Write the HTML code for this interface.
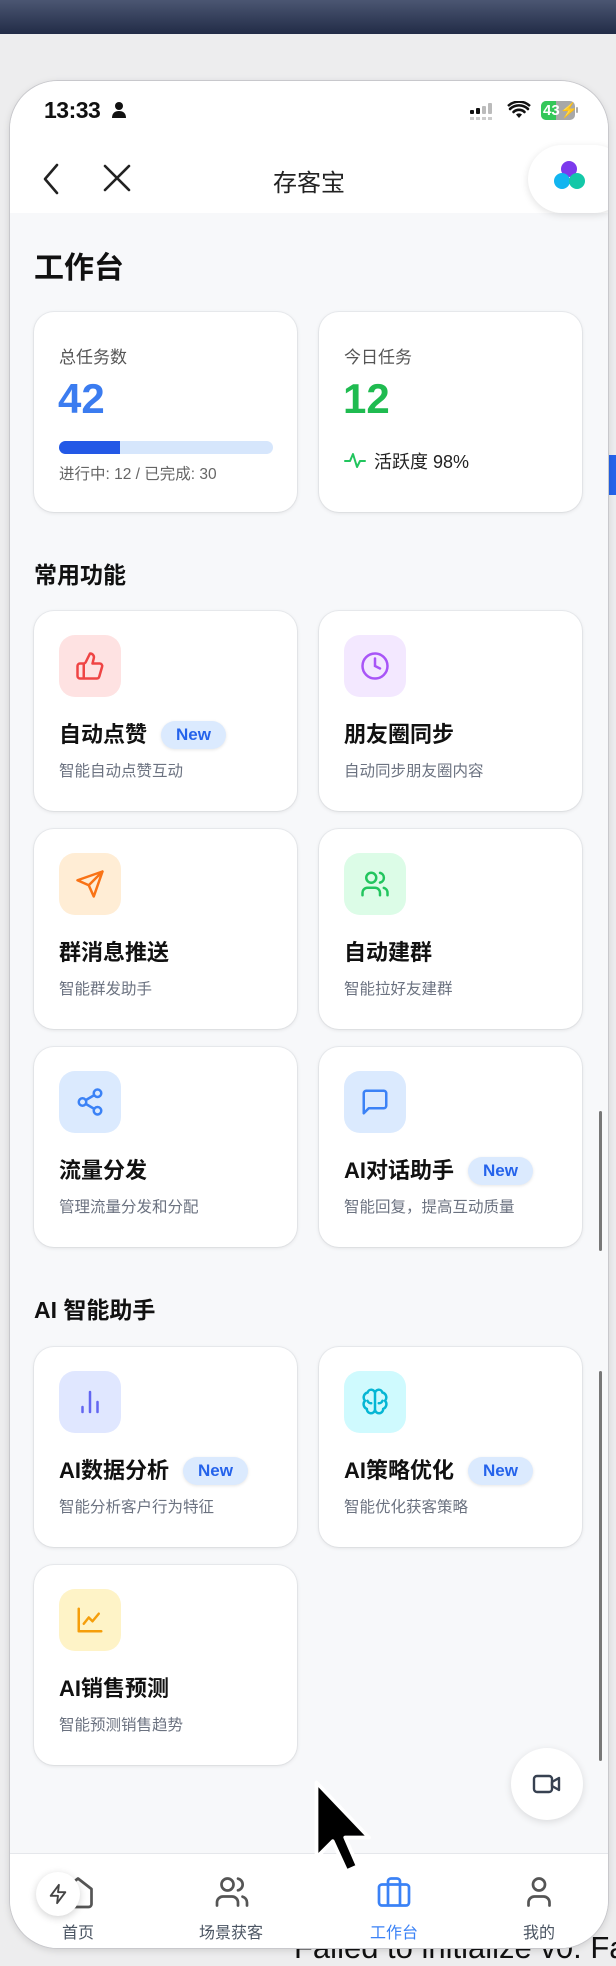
<!DOCTYPE html>
<html><head><meta charset="utf-8"><style>
*{margin:0;padding:0;box-sizing:border-box}
body{width:616px;height:1954px;overflow:hidden;background:#ededee;font-family:"Liberation Sans","Noto Sans CJK SC",sans-serif;position:relative;color:#111}
.abs{position:absolute}
.topbar{left:0;top:0;width:616px;height:34px;background:linear-gradient(#4b5672,#222c47)}
.phone{left:10px;top:81px;width:598px;height:1867px;background:#f7f8fa;border-radius:48px;overflow:hidden;box-shadow:0 0 0 1px #c8c8cc,0 2px 8px rgba(0,0,0,.15)}
.card{position:absolute;background:#fff;border-radius:20px;box-shadow:0 1px 4px rgba(0,0,0,.1),0 0 0 1px #eceef1}
.ib{position:absolute;left:25px;top:24px;width:62px;height:62px;border-radius:16px;display:flex;align-items:center;justify-content:center}
.t{position:absolute;left:25px;top:109px;font-size:22px;font-weight:bold;line-height:30px;color:#111;display:flex;align-items:center}
.s{position:absolute;left:25px;top:151px;font-size:15.5px;color:#6b7280;line-height:20px}
.new{display:inline-block;margin-left:14px;background:#dbeafe;color:#2563eb;font-size:17px;font-weight:bold;border-radius:16px;padding:3px 15px;line-height:22px;box-shadow:0 1px 3px rgba(0,0,0,.1)}
.h{position:absolute;left:24px;font-size:23px;font-weight:bold}
.tab{position:absolute;top:1838px;width:120px;text-align:center;font-size:16px;color:#4b5563}
</style></head><body>
<div class="abs topbar"></div>
<div class="abs" style="left:294px;top:1930px;font-size:31px;color:#111;white-space:nowrap">Failed to initialize v0: Fai</div>
<div class="abs" style="left:608px;top:455px;width:8px;height:40px;background:#2563eb"></div>
<div class="abs phone">
  <div class="abs" style="left:0;top:0;width:598px;height:132px;background:#fff"></div>
  <div class="abs" style="left:34px;top:16px;font-size:23px;font-weight:bold;letter-spacing:-0.5px">13:33</div>
  <svg class="abs" style="left:101px;top:20px" width="16" height="18" viewBox="0 0 16 18"><circle cx="8" cy="5" r="4" fill="#111"/><path d="M1 17c0-5 3-7 7-7s7 2 7 7z" fill="#111"/></svg>
  <svg class="abs" style="left:460px;top:22px" width="26" height="18" viewBox="0 0 26 18"><rect x="0" y="7" width="4" height="4" rx="1" fill="#111"/><rect x="6" y="5" width="4" height="6" rx="1" fill="#111"/><rect x="12" y="3" width="4" height="8" rx="1" fill="#bbb"/><rect x="18" y="0" width="4" height="11" rx="1" fill="#bbb"/><g fill="#ccc"><rect x="0" y="14" width="4" height="3"/><rect x="6" y="14" width="4" height="3"/><rect x="12" y="14" width="4" height="3"/><rect x="18" y="14" width="4" height="3"/></g></svg>
  <svg class="abs" style="left:497px;top:20px" width="24" height="18" viewBox="0 0 24 18"><path d="M12 17l-3-3.5a4.5 4.5 0 016 0z" fill="#111"/><path d="M3 8a13 13 0 0118 0M6.5 11a8 8 0 0111 0" stroke="#111" stroke-width="2.6" fill="none" stroke-linecap="round"/><path d="M1 5a16 16 0 0122 0" stroke="#111" stroke-width="2.4" fill="none"/></svg>
  <div class="abs" style="left:531px;top:20px;width:34px;height:19px;border-radius:5px;background:#a8a8a8;overflow:hidden"><div style="width:15px;height:19px;background:#34c759"></div><div class="abs" style="left:2px;top:0;font-size:15px;font-weight:bold;color:#fff;line-height:19px">43⚡</div></div>
  <div class="abs" style="left:566px;top:26px;width:2px;height:6px;background:#aaa;border-radius:1px"></div>
  <svg class="abs" style="left:28px;top:80px" width="28" height="36" viewBox="0 0 28 36"><path d="M19 4L7 18l12 14" stroke="#222" stroke-width="2.6" fill="none" stroke-linecap="round" stroke-linejoin="round"/></svg>
  <svg class="abs" style="left:92px;top:82px" width="30" height="30" viewBox="0 0 30 30"><path d="M3 3l24 24M27 3L3 27" stroke="#222" stroke-width="2.6" stroke-linecap="round"/></svg>
  <div class="abs" style="left:0;width:598px;top:82px;text-align:center;font-size:24px;color:#222">存客宝</div>
  <div class="abs" style="left:518px;top:64px;width:100px;height:68px;border-radius:34px;background:#fff;box-shadow:0 2px 8px rgba(0,0,0,.12)"></div>
  <svg class="abs" style="left:540px;top:76px" width="40" height="40" viewBox="0 0 40 40"><circle cx="19" cy="12" r="8" fill="#7c3aed"/><circle cx="12" cy="24" r="8" fill="#12b5f0"/><circle cx="27" cy="24" r="8" fill="#14c8a8"/></svg>
  <div class="abs" style="left:24px;top:162px;font-size:30px;font-weight:bold">工作台</div>
  <div class="card" style="left:24px;top:231px;width:263px;height:200px">
    <div class="abs" style="left:25px;top:31px;font-size:17px;color:#555">总任务数</div>
    <div class="abs" style="left:24px;top:63px;font-size:42px;font-weight:bold;color:#3b7cf0">42</div>
    <div class="abs" style="left:25px;top:129px;width:214px;height:13px;border-radius:7px;background:#d6e6fc;overflow:hidden"><div style="width:61px;height:13px;background:#2358e6"></div></div>
    <div class="abs" style="left:25px;top:150px;font-size:15.5px;color:#666">进行中: 12 / 已完成: 30</div>
  </div>
  <div class="card" style="left:309px;top:231px;width:263px;height:200px">
    <div class="abs" style="left:25px;top:31px;font-size:17px;color:#555">今日任务</div>
    <div class="abs" style="left:24px;top:63px;font-size:42px;font-weight:bold;color:#1fbb50">12</div>
    <svg class="abs" style="left:25px;top:139px" width="22" height="18" viewBox="0 0 22 18"><path d="M1 10h5l3-7 4 13 3-6h5" stroke="#22c55e" stroke-width="2" fill="none" stroke-linejoin="round" stroke-linecap="round"/></svg>
    <div class="abs" style="left:55px;top:136px;font-size:18px;color:#222">活跃度 98%</div>
  </div>
  <div class="h" style="top:475px">常用功能</div>
  <div class="card" style="left:24px;top:530px;width:263px;height:200px">
    <div class="ib" style="background:#fee2e2"><svg width="30" height="30" viewBox="0 0 24 24" fill="none" stroke="#ef4444" stroke-width="2" stroke-linejoin="round"><path d="M7 10v12M15 5.9L14 10h5.8a2 2 0 011.9 2.5l-2.3 8A2 2 0 0117.5 22H4a2 2 0 01-2-2v-8a2 2 0 012-2h2.8a2 2 0 001.8-1.1L12 2a3 3 0 013 3.9z"/></svg></div>
    <div class="t">自动点赞<span class="new">New</span></div><div class="s">智能自动点赞互动</div></div>
  <div class="card" style="left:309px;top:530px;width:263px;height:200px">
    <div class="ib" style="background:#f3e8ff"><svg width="30" height="30" viewBox="0 0 24 24" fill="none" stroke="#a855f7" stroke-width="2" stroke-linecap="round"><circle cx="12" cy="12" r="10"/><path d="M12 6v6l4 2"/></svg></div>
    <div class="t">朋友圈同步</div><div class="s">自动同步朋友圈内容</div></div>
  <div class="card" style="left:24px;top:748px;width:263px;height:200px">
    <div class="ib" style="background:#ffedd5"><svg width="30" height="30" viewBox="0 0 24 24" fill="none" stroke="#f97316" stroke-width="2" stroke-linejoin="round" stroke-linecap="round"><path d="M22 2L11 13M22 2l-7 20-4-9-9-4z"/></svg></div>
    <div class="t">群消息推送</div><div class="s">智能群发助手</div></div>
  <div class="card" style="left:309px;top:748px;width:263px;height:200px">
    <div class="ib" style="background:#dcfce7"><svg width="30" height="30" viewBox="0 0 24 24" fill="none" stroke="#22c55e" stroke-width="2" stroke-linecap="round"><path d="M16 21v-2a4 4 0 00-4-4H6a4 4 0 00-4 4v2"/><circle cx="9" cy="7" r="4"/><path d="M22 21v-2a4 4 0 00-3-3.9M16 3.1a4 4 0 010 7.8"/></svg></div>
    <div class="t">自动建群</div><div class="s">智能拉好友建群</div></div>
  <div class="card" style="left:24px;top:966px;width:263px;height:200px">
    <div class="ib" style="background:#dbeafe"><svg width="30" height="30" viewBox="0 0 24 24" fill="none" stroke="#3b82f6" stroke-width="2"><circle cx="18" cy="5" r="3"/><circle cx="6" cy="12" r="3"/><circle cx="18" cy="19" r="3"/><path d="M8.6 13.5l6.8 4M15.4 6.5l-6.8 4"/></svg></div>
    <div class="t">流量分发</div><div class="s">管理流量分发和分配</div></div>
  <div class="card" style="left:309px;top:966px;width:263px;height:200px">
    <div class="ib" style="background:#dbeafe"><svg width="30" height="30" viewBox="0 0 24 24" fill="none" stroke="#3b82f6" stroke-width="2" stroke-linejoin="round"><path d="M21 15a2 2 0 01-2 2H7l-4 4V5a2 2 0 012-2h14a2 2 0 012 2z"/></svg></div>
    <div class="t">AI对话助手<span class="new">New</span></div><div class="s">智能回复，提高互动质量</div></div>
  <div class="h" style="top:1210px">AI 智能助手</div>
  <div class="card" style="left:24px;top:1266px;width:263px;height:200px">
    <div class="ib" style="background:#e0e7ff"><svg width="30" height="30" viewBox="0 0 24 24" fill="none" stroke="#6366f1" stroke-width="2" stroke-linecap="round"><path d="M12 20V4M18 20v-8M6 20v-4"/></svg></div>
    <div class="t">AI数据分析<span class="new">New</span></div><div class="s">智能分析客户行为特征</div></div>
  <div class="card" style="left:309px;top:1266px;width:263px;height:200px">
    <div class="ib" style="background:#cffafe"><svg width="30" height="30" viewBox="0 0 24 24" fill="none" stroke="#06b6d4" stroke-width="2" stroke-linecap="round" stroke-linejoin="round"><path d="M12 5a3 3 0 00-5.9-.6A4 4 0 004 11a4 4 0 001.5 6.5A3 3 0 0012 18zM12 5a3 3 0 015.9-.6A4 4 0 0120 11a4 4 0 01-1.5 6.5A3 3 0 0112 18zM12 5v14M9 13a3 3 0 01-3-2M15 13a3 3 0 003-2"/></svg></div>
    <div class="t">AI策略优化<span class="new">New</span></div><div class="s">智能优化获客策略</div></div>
  <div class="card" style="left:24px;top:1484px;width:263px;height:200px">
    <div class="ib" style="background:#fef3c7"><svg width="30" height="30" viewBox="0 0 24 24" fill="none" stroke="#f59e0b" stroke-width="2" stroke-linecap="round" stroke-linejoin="round"><path d="M3 3v18h18M7 15l4-5 3 3 5-6"/></svg></div>
    <div class="t">AI销售预测</div><div class="s">智能预测销售趋势</div></div>
  <div class="abs" style="left:501px;top:1667px;width:72px;height:72px;border-radius:50%;background:#fff;box-shadow:0 2px 8px rgba(0,0,0,.12)"></div>
  <svg class="abs" style="left:522px;top:1690px" width="30" height="26" viewBox="0 0 30 26"><rect x="2" y="5" width="18" height="16" rx="3" fill="none" stroke="#374151" stroke-width="2.4"/><path d="M20 11l7-4v12l-7-4z" fill="none" stroke="#374151" stroke-width="2.4" stroke-linejoin="round"/></svg>
  <div class="abs" style="left:589px;top:1030px;width:3px;height:140px;background:#777;border-radius:2px"></div>
  <div class="abs" style="left:589px;top:1290px;width:3px;height:390px;background:#777;border-radius:2px"></div>
  <div class="abs" style="left:0;top:1772px;width:598px;height:95px;background:#fff;border-top:1px solid #e5e7eb"></div>
  <svg class="abs" style="left:50px;top:1793px" width="36" height="36" viewBox="0 0 24 24" fill="none" stroke="#555" stroke-width="1.8" stroke-linejoin="round"><path d="M3 10l9-7 9 7v10a2 2 0 01-2 2H5a2 2 0 01-2-2z"/></svg>
  <svg class="abs" style="left:204px;top:1793px" width="36" height="36" viewBox="0 0 24 24" fill="none" stroke="#555" stroke-width="1.8" stroke-linecap="round"><path d="M16 21v-2a4 4 0 00-4-4H6a4 4 0 00-4 4v2"/><circle cx="9" cy="7" r="4"/><path d="M22 21v-2a4 4 0 00-3-3.9M16 3.1a4 4 0 010 7.8"/></svg>
  <svg class="abs" style="left:366px;top:1793px" width="36" height="36" viewBox="0 0 24 24" fill="none" stroke="#3b82f6" stroke-width="1.8" stroke-linejoin="round"><rect x="2" y="7" width="20" height="14" rx="2"/><path d="M16 21V5a2 2 0 00-2-2h-4a2 2 0 00-2 2v16"/></svg>
  <svg class="abs" style="left:511px;top:1793px" width="36" height="36" viewBox="0 0 24 24" fill="none" stroke="#555" stroke-width="1.8" stroke-linecap="round"><circle cx="12" cy="7" r="4"/><path d="M19 21v-2a4 4 0 00-4-4H9a4 4 0 00-4 4v2"/></svg>
  <div class="tab" style="left:8px">首页</div>
  <div class="tab" style="left:161px">场景获客</div>
  <div class="tab" style="left:324px;color:#3b82f6">工作台</div>
  <div class="tab" style="left:469px">我的</div>
  <div class="abs" style="left:26px;top:1791px;width:44px;height:44px;border-radius:50%;background:#fff;box-shadow:0 2px 8px rgba(0,0,0,.18)"></div>
  <svg class="abs" style="left:37px;top:1801px" width="22" height="24" viewBox="0 0 24 24" fill="none" stroke="#444" stroke-width="2" stroke-linejoin="round"><path d="M13 2L4 14h8l-1 8 9-12h-8z"/></svg>
</div>
<svg class="abs" style="left:314px;top:1780px" width="70" height="100" viewBox="0 0 56 80"><path d="M2 2v60l13-13 11 24 9-4-10-23h19z" fill="#000" stroke="#fff" stroke-width="3" stroke-linejoin="round"/></svg>
</body></html>
